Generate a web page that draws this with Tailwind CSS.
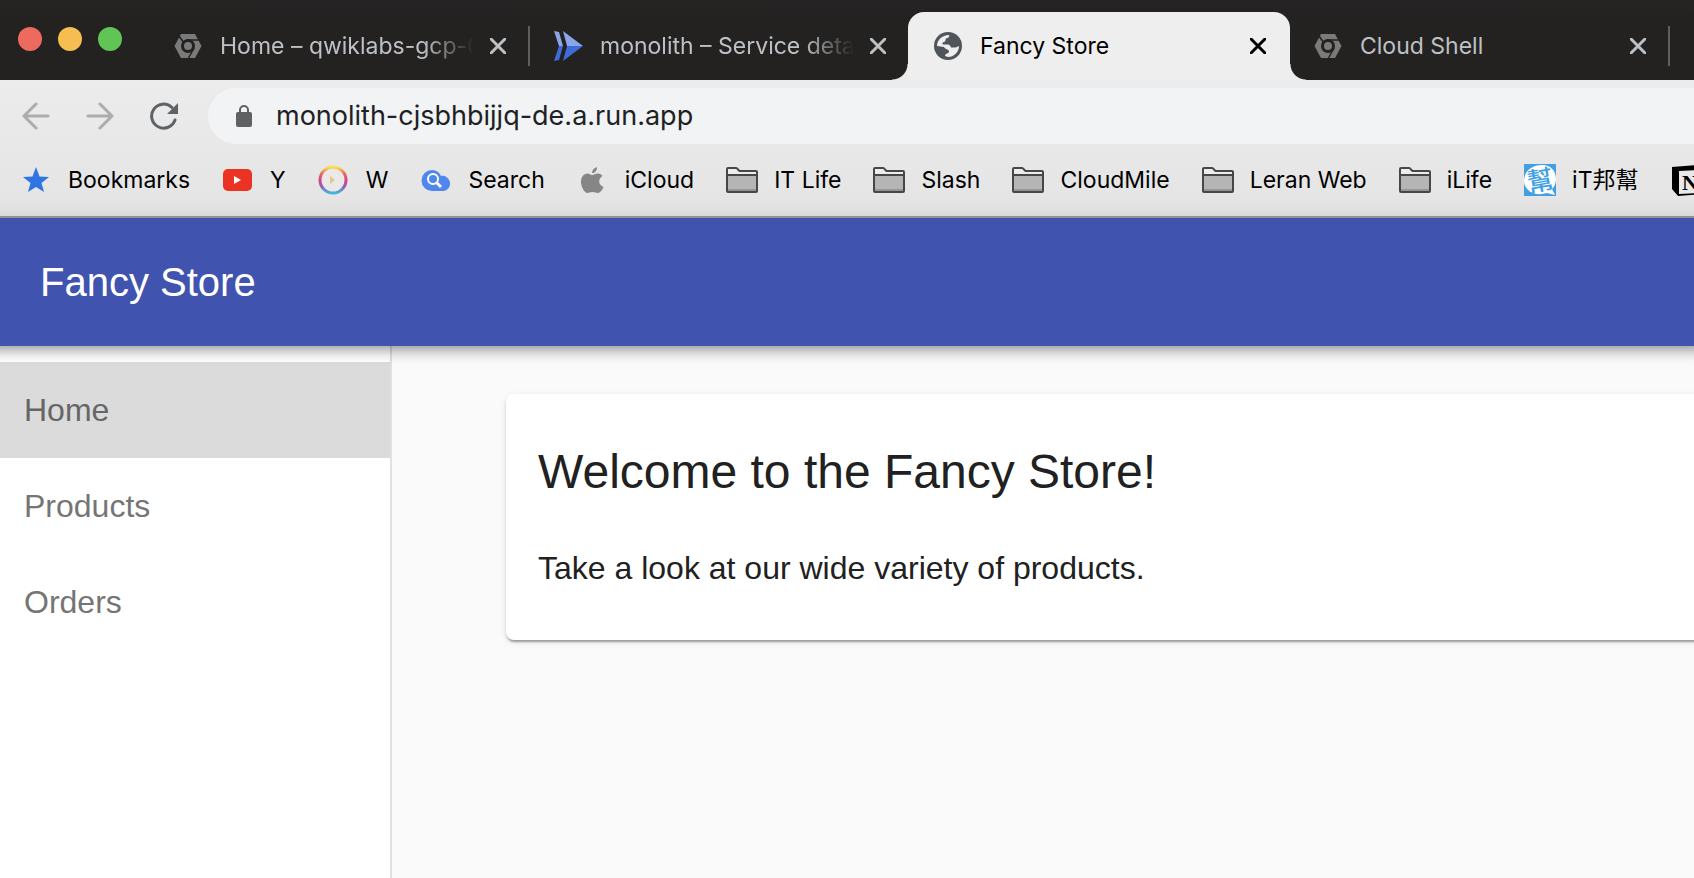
<!DOCTYPE html>
<html lang="en">
<head>
<meta charset="utf-8">
<title>Fancy Store</title>
<script src="https://cdn.jsdelivr.net/npm/@tailwindcss/browser@4"></script>
</head>
<body class="flex h-screen flex-col overflow-hidden bg-[#fafafa] font-['Liberation_Sans',Arial,sans-serif]">
<svg class="hidden" aria-hidden="true">
  <symbol id="hex" viewBox="0 0 28 28"><path fill="#7a7a7a" d="M7 2h14l6.500 12L21 26H7L.500 14z"/><circle cx="14" cy="14" r="7" fill="#242220"/><circle cx="14" cy="14" r="4" fill="#7a7a7a"/><path d="M5 4l5 7M13 8h12M20 16l-6 11" stroke="#242220" stroke-width="1.500" fill="none"/></symbol>
  <symbol id="close" viewBox="0 0 16 16"><path d="M1 1l14 14M15 1 1 15" fill="none" stroke="currentColor" stroke-width="3" stroke-linecap="round"/></symbol>
  <symbol id="folder" viewBox="0 0 32 32"><path d="M1 27V5q0-1 1-1h8q1 0 2 1.500L13.500 7H30q1 0 1 1v19q0 1-1 1H2q-1 0-1-1z" fill="#ededed"/><path d="M2 11h28v14H2z" fill="#b5b5b5"/><path d="M2 25h28v2H2z" fill="#969696"/><path d="M1 27V5q0-1 1-1h8q1 0 2 1.500L13.500 7H30q1 0 1 1v19q0 1-1 1H2q-1 0-1-1zM2 11h28" fill="none" stroke="#474747" stroke-width="2"/></symbol>
</svg>

<header class="shrink-0 font-[Inter,'Noto_Sans_CJK_TC',sans-serif]">
  <div class="flex h-20 items-end bg-linear-to-b from-[#262425] to-[#242220] to-20%">
    <div class="flex h-20 w-[148px] shrink-0 gap-4 pt-[27px] pl-[18px]">
      <button aria-label="Close window" class="size-6 rounded-full bg-[#ed6a5f]"></button>
      <button aria-label="Minimize window" class="size-6 rounded-full bg-[#f6be50]"></button>
      <button aria-label="Zoom window" class="size-6 rounded-full bg-[#61c555]"></button>
    </div>
    <nav aria-label="Tabs" class="flex text-[23px] text-[#bdc1c6]">
      <div class="flex h-[68px] w-[382px] shrink-0 items-center pl-[26px]">
        <svg class="size-7 shrink-0"><use href="#hex"/></svg>
        <a href="#" class="ml-[18px] w-[254px] overflow-hidden whitespace-nowrap mask-r-from-80% mask-r-to-100%">Home – qwiklabs-gcp-01</a>
        <button aria-label="Close tab" class="ml-4"><svg class="size-4"><use href="#close"/></svg></button>
        <span class="ml-auto h-10 w-[2px] bg-[#5f5f5f]"></span>
      </div>
      <div class="flex h-[68px] w-[378px] shrink-0 items-center pl-6">
        <svg class="size-[30px] shrink-0" viewBox="0 0 30 30"><path d="M0 0l5 1 4 14H5zM9 0l20 15H13z" fill="#8aa6e8"/><path d="M0 30l5-1 4-14H5zM9 30l20-15H13z" fill="#3f6bd8"/></svg>
        <a href="#" class="ml-4 w-[254px] overflow-hidden whitespace-nowrap mask-r-from-80% mask-r-to-100%">monolith – Service details</a>
        <button aria-label="Close tab" class="ml-4"><svg class="size-4"><use href="#close"/></svg></button>
      </div>
      <div class="relative flex h-[68px] w-[382px] shrink-0 items-center rounded-t-2xl bg-[#eeeeee] pl-[26px] text-black">
        <span class="absolute bottom-0 -left-4 size-4 bg-[radial-gradient(circle_at_0_0,transparent_15px,#ececec_16px)]"></span>
        <span class="absolute -right-4 bottom-0 size-4 bg-[radial-gradient(circle_at_100%_0,transparent_15px,#ececec_16px)]"></span>
        <svg class="size-7 shrink-0" viewBox="0 0 28 28"><circle cx="14" cy="14" r="14" fill="#50555b"/><path d="M3 14C3 8 8 3 15 3c1 2-1 3-3 3.500-1 2 0 3-2 3.500s-2 1.500-1 2.500h5c2 0 3 3 3 3h4c2 0 3-1.500 4-1.500C25 20 20 25 14 25l-3-1c0-3 4-2 4-4.500s-4-2-5-4.500z" fill="#eee"/></svg>
        <a href="#" class="ml-[18px] w-[254px]">Fancy Store</a>
        <button aria-label="Close tab" class="ml-4"><svg class="size-4"><use href="#close"/></svg></button>
      </div>
      <div class="flex h-[68px] w-[380px] shrink-0 items-center pl-6">
        <svg class="size-7 shrink-0"><use href="#hex"/></svg>
        <a href="#" class="ml-[18px] w-[254px]">Cloud Shell</a>
        <button aria-label="Close tab" class="ml-4"><svg class="size-4"><use href="#close"/></svg></button>
        <span class="ml-auto h-10 w-[2px] bg-[#5f5f5f]"></span>
      </div>
    </nav>
  </div>
  <div class="border-b-2 border-[#9c9c9c] bg-linear-to-b from-[#ececec] to-[#e4e4e4]">
    <div class="flex items-center pt-2 pl-[22px]">
      <button aria-label="Back" class="text-[#acacac]"><svg class="size-7" viewBox="0 0 28 28" fill="none" stroke="currentColor" stroke-width="3" stroke-linecap="round" stroke-linejoin="round"><path d="M14 2 2 14l12 12M2 14h24"/></svg></button>
      <button aria-label="Forward" class="ml-9 text-[#acacac]"><svg class="size-7" viewBox="0 0 28 28" fill="none" stroke="currentColor" stroke-width="3" stroke-linecap="round" stroke-linejoin="round"><path d="m14 2 12 12-12 12M26 14H2"/></svg></button>
      <button aria-label="Reload" class="ml-9 text-[#5f6368]"><svg class="size-7" viewBox="0 0 28 28"><path d="M25 18A12 12 0 1 1 22 5.500" fill="none" stroke="currentColor" stroke-width="3" stroke-linecap="round"/><path d="M28 1v11H17z" fill="currentColor"/></svg></button>
      <div class="ml-[30px] flex h-14 flex-1 items-center rounded-l-full bg-[#f1f3f4] pl-7">
        <svg class="h-[22px] w-4 shrink-0" viewBox="0 0 16 22"><path d="M4 9V5a4 4 0 0 1 8 0v4" fill="none" stroke="#5f6163" stroke-width="2"/><rect y="7" width="16" height="15" rx="2" fill="#5f6163"/></svg>
        <input aria-label="Address" value="monolith-cjsbhbijjq-de.a.run.app" class="ml-6 min-w-0 flex-1 bg-transparent text-[27px] text-[#202124] outline-none">
      </div>
    </div>
    <nav aria-label="Bookmarks" class="flex h-[72px] items-center gap-8 pl-5 text-[23px] whitespace-nowrap text-black">
      <a href="#" class="flex shrink-0 items-center gap-4"><svg class="size-8" viewBox="0 0 32 32"><path d="m16 3 3.500 9.500L29 13l-7.500 6 2.500 9-8-5-8 5 2.500-9L3 13l9.500-.500z" fill="#2f76e4"/></svg>Bookmarks</a>
      <a href="#" class="flex shrink-0 items-center gap-4"><svg class="size-8" viewBox="0 0 32 32"><rect x="1" y="5" width="29" height="22" rx="5" fill="#ea3323"/><path d="m12 12 7 4-7 4z" fill="#fff"/></svg>Y</a>
      <a href="#" class="flex shrink-0 items-center gap-4"><svg class="size-8" viewBox="0 0 32 32"><defs><linearGradient id="ring" x2="0" y2="1"><stop stop-color="#fbe34e"/><stop offset=".25" stop-color="#ea6a5e"/><stop offset=".5" stop-color="#dc3f80"/><stop offset=".75" stop-color="#9061b0"/><stop offset="1" stop-color="#45b2e4"/></linearGradient></defs><circle cx="15" cy="16" r="13" fill="#ebe9e8" stroke="url(#ring)" stroke-width="3"/><path d="m12 12 5 4-5 4z" fill="#e0c98c"/></svg>W</a>
      <a href="#" class="flex shrink-0 items-center gap-4"><svg class="size-8" viewBox="0 0 32 32"><path d="M12 6a10 10 0 0 1 9 6 7.500 7.500 0 1 1 3 15H12a10.500 10.500 0 0 1 0-21z" fill="#4f87ee"/><circle cx="13" cy="15" r="5" fill="none" stroke="#fff" stroke-width="2"/><path d="m17 19 4 4" stroke="#fff" stroke-width="3"/></svg>Search</a>
      <a href="#" class="flex shrink-0 items-center gap-4"><svg class="size-8" viewBox="0 0 32 32"><path d="M20 3c0 4-2 6-5 6 0-3 2-5 5-6zM15 11c2 0 3-1.500 6-1.500 2 0 3.500 1 4.500 2.500-5 3-4 9 1 11-1.500 3.500-3.500 6-5.500 6s-3-1-5.500-1-3.500 1-5 1C7 29 4 22 4 18c0-5 3-8.500 6.500-8.500 2 0 3 1.500 4.500 1.500z" fill="#868686"/></svg>iCloud</a>
      <a href="#" class="flex shrink-0 items-center gap-4"><svg class="size-8"><use href="#folder"/></svg>IT Life</a>
      <a href="#" class="flex shrink-0 items-center gap-4"><svg class="size-8"><use href="#folder"/></svg>Slash</a>
      <a href="#" class="flex shrink-0 items-center gap-4"><svg class="size-8"><use href="#folder"/></svg>CloudMile</a>
      <a href="#" class="flex shrink-0 items-center gap-4"><svg class="size-8"><use href="#folder"/></svg>Leran Web</a>
      <a href="#" class="flex shrink-0 items-center gap-4"><svg class="size-8"><use href="#folder"/></svg>iLife</a>
      <a href="#" class="flex shrink-0 items-center gap-4"><svg class="size-8" viewBox="0 0 32 32"><path d="M0 0h32v32H0z" fill="#419fe5"/><path d="M18 1c9 0 14 6 14 14 0 5-2 8-4 10l3 6-8-2C10 33 0 26 0 17 0 7 8 1 18 1z" fill="#fff"/><text x="3" y="26" font-size="26" font-weight="500" fill="#419fe5" transform="rotate(-10 16 16)">幫</text></svg>iT邦幫</a>
      <a href="#" aria-label="Notion" class="shrink-0"><svg class="size-8" viewBox="0 0 32 32"><path d="M1 3l24-2 6 5v24l-24 2-6-7z" fill="#000"/><path d="M8 7l22-1v23L8 30z" fill="#e9e9e9"/><text x="11" y="26" font-size="22" font-weight="700" font-family="Liberation Serif">N</text></svg></a>
    </nav>
  </div>
</header>

<div class="z-10 -mx-4 flex h-32 shrink-0 items-center bg-[#4053af] px-14 text-white shadow-[0_4px_8px_-2px_rgba(0,0,0,0.2),0_8px_10px_rgba(0,0,0,0.14),0_2px_20px_rgba(0,0,0,0.12)]">
  <h1 class="text-[40px]">Fancy Store</h1>
</div>
<div class="flex min-h-0 flex-1">
  <nav aria-label="Store" class="w-[392px] shrink-0 border-r-2 border-[#e0e0e0] bg-white pt-4 text-[32px] text-[#757575]">
    <a href="#" class="flex h-24 items-center bg-[#dbdbdb] px-6 text-[#666666]">Home</a>
    <a href="#" class="flex h-24 items-center px-6">Products</a>
    <a href="#" class="flex h-24 items-center px-6">Orders</a>
  </nav>
  <main class="min-w-0 flex-1 overflow-hidden pt-12 pl-[114px] text-[#212121]">
    <section class="-mr-4 rounded-lg bg-white px-8 pt-[46px] pb-12 shadow-[0_4px_2px_-2px_rgba(0,0,0,0.2),0_2px_2px_rgba(0,0,0,0.14),0_2px_6px_rgba(0,0,0,0.12)]">
      <h2 class="text-[48px] leading-[64px]">Welcome to the Fancy Store!</h2>
      <p class="mt-10 text-[32px] leading-[48px]">Take a look at our wide variety of products.</p>
    </section>
  </main>
</div>
</body>
</html>
